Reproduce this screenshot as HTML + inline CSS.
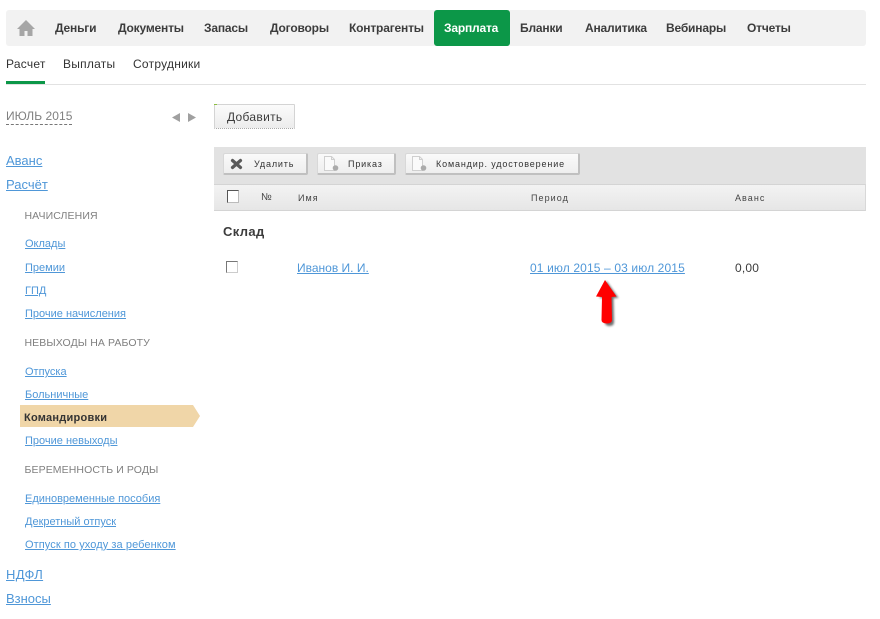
<!DOCTYPE html>
<html lang="ru">
<head>
<meta charset="utf-8">
<title>Зарплата</title>
<style>
html,body{margin:0;padding:0;background:#fff}
body{width:880px;height:619px;position:relative;overflow:hidden;font-family:"Liberation Sans",Arial,sans-serif;font-size:12px;color:#3c3c3c}
.t,.b,a.t{position:absolute;white-space:nowrap;line-height:16px}
.n{font-weight:bold;font-size:12px;top:20px;color:#3c3c3c;letter-spacing:-.18px}
.s{font-size:12px;top:56px;color:#333;letter-spacing:.25px}
a{color:#4f97d8;text-decoration:underline}
.big{font-size:13px;left:6px}
.sm{font-size:11px;left:25px}
.h{font-size:10.5px;left:24.500px;color:#808080;letter-spacing:.1px}
.box{position:absolute}
.btn{position:absolute;top:153px;height:22px;box-sizing:border-box;background:linear-gradient(#fafafa,#eeeeee);border:1px solid #d8d8d8;border-right:2px solid #c0c0c0;border-bottom:2px solid #c0c0c0;border-radius:2px}
.bl{font-size:9px;letter-spacing:.85px;top:156px;color:#333}
.hd{font-size:9px;letter-spacing:1.05px;top:190px;color:#444}
</style>
</head>
<body>
<div class="box" style="left:6px;top:10px;width:860px;height:36px;background:#f2f2f2;border-radius:3px"></div>
<div class="box" style="left:434px;top:10px;width:76px;height:36px;background:#0c9748;border-radius:3px"></div>
<svg class="box" style="left:16px;top:19px" width="20" height="18" viewBox="0 0 20 18"><path d="M10 1 L19 10 L16.500 10 L16.500 17 L11.500 17 L11.500 12 L8.500 12 L8.500 17 L3.500 17 L3.500 10 L1 10 Z" fill="#a6a6a6"/></svg>
<span class="t n" style="left:55px">Деньги</span>
<span class="t n" style="left:118px">Документы</span>
<span class="t n" style="left:204px">Запасы</span>
<span class="t n" style="left:270px">Договоры</span>
<span class="t n" style="left:349px">Контрагенты</span>
<span class="t n" style="left:444px;color:#fff">Зарплата</span>
<span class="t n" style="left:520px">Бланки</span>
<span class="t n" style="left:585px">Аналитика</span>
<span class="t n" style="left:666px">Вебинары</span>
<span class="t n" style="left:747px">Отчеты</span>

<span class="t s" style="left:6px">Расчет</span>
<span class="t s" style="left:63px">Выплаты</span>
<span class="t s" style="left:133px">Сотрудники</span>
<div class="box" style="left:6px;top:84px;width:860px;height:1px;background:#e2e2e2"></div>
<div class="box" style="left:6px;top:81px;width:39px;height:3px;background:#0c9748"></div>

<span class="t" style="left:6px;top:108px;color:#808080;letter-spacing:.05px;border-bottom:1px dashed #777;line-height:16px">ИЮЛЬ 2015</span>
<svg class="box" style="left:171px;top:112px" width="26" height="11" viewBox="0 0 26 11"><path d="M1 5.500 L9 1 L9 10 Z" fill="#a0a0a0"/><path d="M17 1 L25 5.500 L17 10 Z" fill="#a0a0a0"/></svg>

<div class="box" style="left:214px;top:104px;width:81px;height:25px;box-sizing:border-box;background:linear-gradient(#fbfbfb,#ececec);border:1px solid #d4d4d4;border-bottom:1px dotted #aaa;border-radius:1px"></div>
<div class="box" style="left:214px;top:104px;width:3px;height:1px;background:#8cbf3f"></div>
<span class="t" style="left:227px;top:109px;color:#3c3c3c;font-size:12px;letter-spacing:.3px">Добавить</span>

<div class="box" style="left:214px;top:147px;width:652px;height:37px;background:#e2e2e2"></div>
<div class="box" style="left:214px;top:184px;width:652px;height:27px;box-sizing:border-box;background:linear-gradient(#f3f3f3,#e6e6e6);border-top:1px solid #d4d4d4;border-bottom:1px solid #d4d4d4;border-right:1px solid #d8d8d8"></div>

<div class="btn" style="left:223px;width:85px"></div>
<svg class="box" style="left:229px;top:157px" width="15" height="14" viewBox="0 0 15 14"><path d="M3.500 3.500 L11.500 10.500 M11.500 3.500 L3.500 10.500" stroke="#5a5a5a" stroke-width="3.200" stroke-linecap="round"/></svg>
<span class="t bl" style="left:254px">Удалить</span>

<div class="btn" style="left:317px;width:79px"></div>
<svg class="box" style="left:322px;top:155px" width="20" height="18" viewBox="0 0 20 18"><path d="M2.500 1.500 H9.500 L12.500 4.500 V15.500 H2.500 Z" fill="#fafafa" stroke="#cfcfcf"/><path d="M9.500 1.500 V4.500 H12.500" fill="none" stroke="#cfcfcf"/><circle cx="13.500" cy="13" r="2.800" fill="#ababab"/></svg>
<span class="t bl" style="left:348px">Приказ</span>

<div class="btn" style="left:405px;width:175px"></div>
<svg class="box" style="left:410px;top:155px" width="20" height="18" viewBox="0 0 20 18"><path d="M2.500 1.500 H9.500 L12.500 4.500 V15.500 H2.500 Z" fill="#fafafa" stroke="#cfcfcf"/><path d="M9.500 1.500 V4.500 H12.500" fill="none" stroke="#cfcfcf"/><circle cx="13.500" cy="13" r="2.800" fill="#ababab"/></svg>
<span class="t bl" style="left:436px">Командир. удостоверение</span>

<div class="box" style="left:227px;top:190px;width:12px;height:13px;box-sizing:border-box;background:#fff;border:1px solid #555;border-right-color:#bbb;border-bottom-color:#bbb;outline:0"></div>
<span class="t hd" style="left:261px;letter-spacing:0;font-size:10px">№</span>
<span class="t hd" style="left:298px">Имя</span>
<span class="t hd" style="left:531px">Период</span>
<span class="t hd" style="left:735px">Аванс</span>

<span class="t" style="left:223px;top:224px;font-weight:bold;color:#3c3c3c;font-size:13px;letter-spacing:.35px">Склад</span>

<div class="box" style="left:226px;top:261px;width:12px;height:12px;box-sizing:border-box;background:#fff;border:1px solid #777;border-right-color:#ccc;border-bottom-color:#ccc"></div>
<a class="t" href="#" style="left:297px;top:260px;letter-spacing:0">Иванов И. И.</a>
<a class="t" href="#" style="left:530px;top:260px;letter-spacing:.13px">01 июл 2015 – 03 июл 2015</a>
<span class="t" style="left:735px;top:260px;color:#3c3c3c;letter-spacing:.2px">0,00</span>

<svg class="box" style="left:590px;top:276px" width="34" height="54" viewBox="0 0 34 54">
<defs><filter id="sh" x="-30%" y="-30%" width="160%" height="160%"><feGaussianBlur stdDeviation="1.100"/></filter></defs>
<path d="M15 4 L27 21 L22 21 L22.500 45 Q22.500 49 18 49 Q13.500 49 13.500 45 L14 21 L8 21 Z" fill="#222" opacity=".65" filter="url(#sh)" transform="translate(1.500 1)"/>
<path d="M15 4 L26.500 20.500 L21.500 21 L22 44 Q22 47.500 17 47.500 Q11.500 47.500 11.500 44 L12 21 L6 20.500 Z" fill="#f00"/>
</svg>

<a class="t big" href="#" style="top:153px">Аванс</a>
<a class="t big" href="#" style="top:177px">Расчёт</a>
<span class="t h" style="top:208px">НАЧИСЛЕНИЯ</span>
<a class="t sm" href="#" style="top:236px">Оклады</a>
<a class="t sm" href="#" style="top:260px">Премии</a>
<a class="t sm" href="#" style="top:283px">ГПД</a>
<a class="t sm" href="#" style="top:306px">Прочие начисления</a>
<span class="t h" style="top:335px">НЕВЫХОДЫ НА РАБОТУ</span>
<a class="t sm" href="#" style="top:364px">Отпуска</a>
<a class="t sm" href="#" style="top:387px">Больничные</a>
<svg class="box" style="left:20px;top:405px" width="180" height="22" viewBox="0 0 180 22"><path d="M0 0 H173 L180 11 L173 22 H0 Z" fill="#f0d6a8"/></svg>
<span class="t" style="left:24px;top:410px;font-size:11px;font-weight:bold;color:#333;letter-spacing:.25px">Командировки</span>
<a class="t sm" href="#" style="top:433px">Прочие невыходы</a>
<span class="t h" style="top:462px">БЕРЕМЕННОСТЬ И РОДЫ</span>
<a class="t sm" href="#" style="top:491px">Единовременные пособия</a>
<a class="t sm" href="#" style="top:514px">Декретный отпуск</a>
<a class="t sm" href="#" style="top:537px;letter-spacing:.08px">Отпуск по уходу за ребенком</a>
<a class="t big" href="#" style="top:567px;letter-spacing:.3px">НДФЛ</a>
<a class="t big" href="#" style="top:591px">Взносы</a>
</body>
</html>
